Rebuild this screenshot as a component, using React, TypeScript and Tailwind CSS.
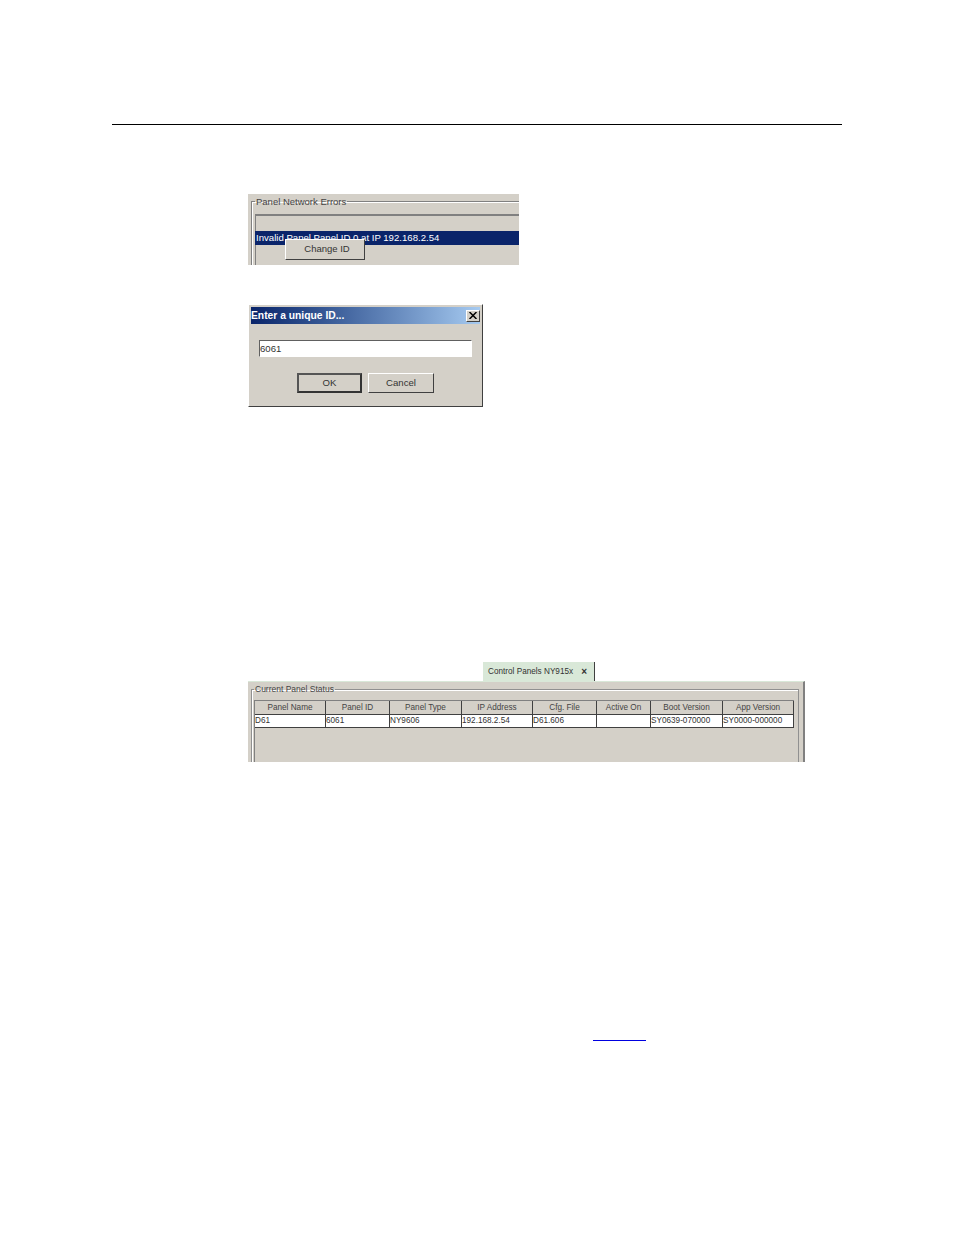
const font = "font-['Liberation_Sans',Arial,sans-serif]";

const columns = [
  { title: "Panel Name", value: "D61", width: "w-[71px]" },
  { title: "Panel ID", value: "6061", width: "w-[64px]" },
  { title: "Panel Type", value: "NY9606", width: "w-[72px]" },
  { title: "IP Address", value: "192.168.2.54", width: "w-[71px]" },
  { title: "Cfg. File", value: "D61.606", width: "w-[64px]" },
  { title: "Active On", value: "", width: "w-[54px]" },
  { title: "Boot Version", value: "SY0639-070000", width: "w-[72px]" },
  { title: "App Version", value: "SY0000-000000", width: "w-[71px]" },
];

const raised = "border border-t-white border-l-white border-r-[#404040] border-b-[#404040]";

const ErrorsPanel = () => (
  <div className="relative ml-[248px] mt-[69px] h-[71px] w-[271px] overflow-hidden bg-[#d4d0c8]">
    <fieldset className="ml-[3px] mt-[2px] h-[90px] w-[290px] border border-[#808080] pl-[3px] shadow-[inset_1px_1px_0_#fff]">
      <legend className="px-[1px] text-[9.5px] leading-[11px] text-[#444]">Panel Network Errors</legend>
      <div className="mt-[7px] h-[17px] border-l border-t-2 border-[#808080] bg-[#d4d0c8]" />
      <div className="h-[14px] whitespace-nowrap bg-[#0a246a] pl-[1px] text-[9.6px] leading-[14px] text-white">
        Invalid Panel Panel ID 0 at IP 192.168.2.54
      </div>
      <div className="h-[40px] border-l border-[#808080]" />
    </fieldset>
    <div className={`absolute left-[37px] top-[45px] flex h-[21px] w-[80px] items-center justify-center bg-[#d4d0c8] pl-[4px] text-[9.5px] text-[#333] ${raised}`}>
      Change ID
    </div>
  </div>
);

const Dialog = () => (
  <div className={`ml-[248px] mt-[39px] h-[103px] w-[235px] bg-[#d4d0c8] p-[2px] ${raised}`}>
    <div className="flex h-[17px] items-center justify-between bg-gradient-to-r from-[#0a246a] to-[#a6caf0]">
      <span className="pt-[2px] text-[10.3px] font-bold leading-none text-white">Enter a unique ID...</span>
      <span className={`flex h-[12px] w-[14px] items-center justify-center bg-[#d4d0c8] ${raised}`}>
        <svg width="8" height="7" viewBox="0 0 8 7" stroke="#000" strokeWidth="1.5">
          <path d="M0.5 0 L7.5 7 M7.5 0 L0.5 7" />
        </svg>
      </span>
    </div>
    <div className="ml-[8px] mt-[16px] flex h-[17px] w-[213px] items-center border border-t-[#606060] border-l-[#606060] border-r-white border-b-white bg-white pt-[1px] text-[9.6px] text-[#333]">
      6061
    </div>
    <div className="mt-[16px] flex gap-[6px] pl-[46px] text-[9.6px] text-[#333]">
      <div className="flex h-[20px] w-[65px] items-center justify-center border-2 border-t-[#555] border-l-[#555] border-r-[#333] border-b-[#333] bg-[#d4d0c8]">OK</div>
      <div className={`flex h-[20px] w-[66px] items-center justify-center bg-[#d4d0c8] ${raised}`}>Cancel</div>
    </div>
  </div>
);

const StatusPanel = () => (
  <div className="ml-[248px] mt-[255px] w-[557px]">
    <div className="ml-[235px] flex h-[19px] w-[112px] items-center justify-between border-r border-[#404040] bg-[#d9e8d8] pl-[5px] pr-[7px] pt-[1px] text-[8.2px] text-[#333]">
      <span>Control Panels NY915x</span>
      <span className="text-[10px] font-bold leading-none">×</span>
    </div>
    <div className="h-[81px] overflow-hidden border-r-2 border-t border-[#808080] border-t-[#d9e8d8] bg-[#d4d0c8] pl-[3px] pt-[2px]">
      <fieldset className="h-[100px] w-[548px] border border-[#909090] pl-[2px] shadow-[inset_1px_1px_0_#fff]">
        <legend className="px-[1px] text-[8.5px] leading-[11px] text-[#444]">Current Panel Status</legend>
        <div className="mt-[5px] border-l border-[#808080]">
          <div className="flex h-[15px] w-[539px] border-t border-[#808080]">
            {columns.map((column) => (
              <div
                key={column.title}
                className={`flex items-center justify-center border-r border-b border-[#404040] pt-[1px] text-[8.2px] text-[#444] ${column.width}`}
              >
                {column.title}
              </div>
            ))}
          </div>
          <div className="flex h-[13px] w-[539px] bg-white">
            {columns.map((column) => (
              <div
                key={column.title}
                className={`overflow-hidden whitespace-nowrap border-r border-b border-[#404040] text-[8.2px] leading-[12px] text-[#333] ${column.width}`}
              >
                {column.value}
              </div>
            ))}
          </div>
          <div className="h-[40px]" />
        </div>
      </fieldset>
    </div>
  </div>
);

export default function App() {
  return (
    <div className={`h-[1235px] w-[954px] overflow-hidden bg-white pt-[124px] ${font}`}>
      <div className="ml-[112px] h-px w-[730px] bg-black" />
      <ErrorsPanel />
      <Dialog />
      <StatusPanel />
      <div className="ml-[593px] mt-[278px] h-px w-[53px] bg-[#0000e0]" />
    </div>
  );
}
